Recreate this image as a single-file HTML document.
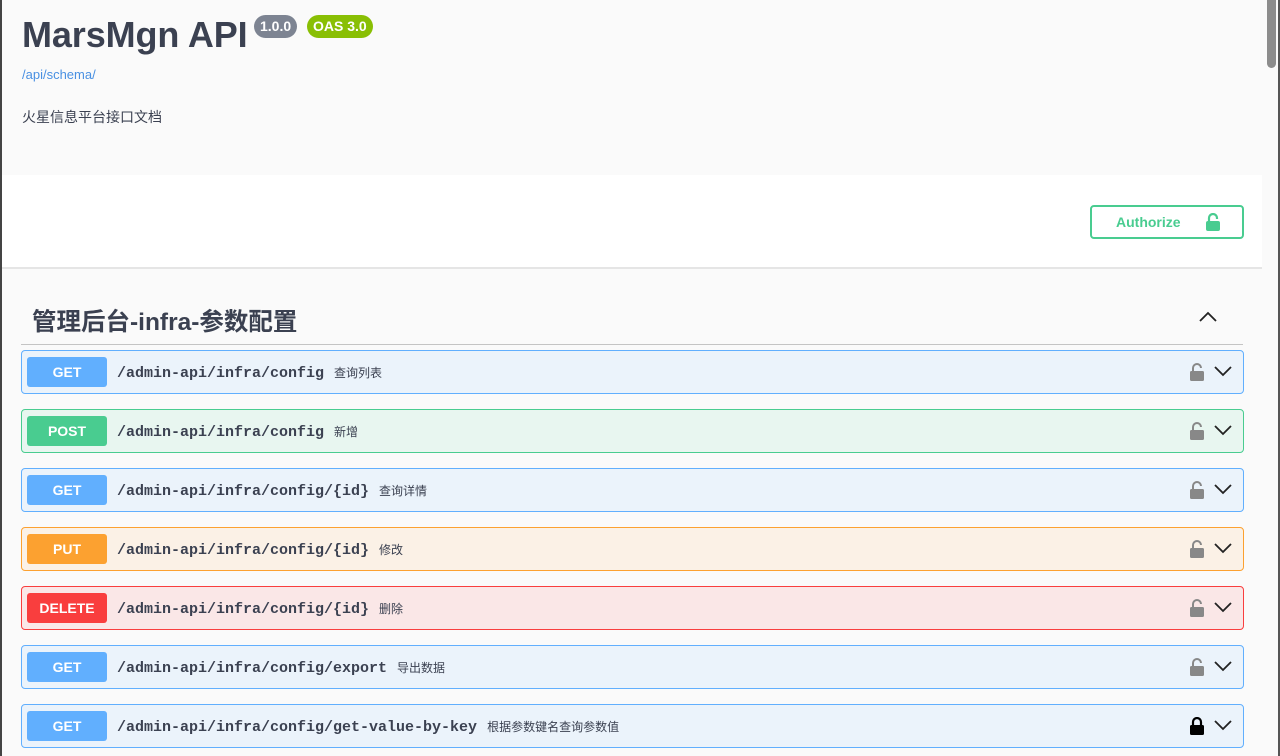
<!DOCTYPE html>
<html><head><meta charset="utf-8"><style>
*{box-sizing:border-box;margin:0;padding:0}
body{width:1280px;height:756px;overflow:hidden;background:#fafafa;font-family:"Liberation Sans","Noto Sans CJK SC",sans-serif;position:relative;color:#3b4151}
.lb{position:absolute;left:0;top:0;width:2px;height:756px;background:#444}
.sb{position:absolute;left:1262px;top:0;width:18px;height:756px;background:#fafafa}
.sb .th{position:absolute;left:5px;top:0;width:9px;height:68px;background:#8c8c8c;border-radius:0 0 5px 5px}
.sb .rl{position:absolute;right:0;top:0;width:2px;height:756px;background:#555}
.hdr{position:absolute;left:2px;top:0;width:1260px;height:175px;background:#fafafa}
h1{position:absolute;left:22px;top:14px;font-size:36px;font-weight:bold;color:#3b4151;letter-spacing:-0.1px}
.badge{position:absolute;top:15px;height:23px;border-radius:12px;color:#fff;font-weight:bold;font-size:14px;line-height:23px;padding:0 6px}
.link{position:absolute;left:22px;top:67px;font-size:13px;color:#4990e2}
.desc{position:absolute;left:22px;top:107px;font-size:14px;color:#3b4151}
.band{position:absolute;left:2px;top:175px;width:1260px;height:94px;background:#fff;border-bottom:2px solid #e5e5e5}
.auth{position:absolute;left:1090px;top:205px;width:154px;height:34px;border:2px solid #49cc90;border-radius:4px;color:#49cc90;font-weight:bold;font-size:14px;line-height:31px;padding-left:24px}
.tag{position:absolute;left:32px;top:303px;font-size:24.5px;font-weight:bold;color:#3b4151}
.tline{position:absolute;left:21px;top:344px;width:1222px;height:1px;background:#c4c4c4}
.op{position:absolute;left:21px;width:1223px;height:44px;border:1px solid;border-radius:4px}
.m{position:absolute;left:5px;top:6px;width:80px;height:30px;border-radius:3px;color:#fff;font-weight:bold;font-size:14px;line-height:30px;text-align:center}
.p{position:absolute;left:95px;top:13px;font-family:"Liberation Mono",monospace;font-weight:bold;font-size:15px;color:#3b4151;white-space:nowrap}
.p span{font-family:"Liberation Sans","Noto Sans CJK SC",sans-serif;font-weight:normal;font-size:12px;margin-left:10px}
.lk{position:absolute;left:1167px;top:12px}
.cv{position:absolute;left:1191px;top:14px}
</style></head><body>
<div class="hdr"></div>
<h1>MarsMgn API</h1>
<div class="badge" style="left:254px;background:#7d8492">1.0.0</div>
<div class="badge" style="left:307px;background:#89bf04">OAS 3.0</div>
<div class="link">/api/schema/</div>
<div class="desc">火星信息平台接口文档</div>
<div class="band"></div>
<div class="auth">Authorize<svg style="position:absolute;left:113px;top:6px" width="16" height="19" viewBox="0 0 16 19"><path d="M4 8V5a4 4 0 0 1 8 0v1" fill="none" stroke="#49cc90" stroke-width="2.2"/><rect x="1" y="8" width="14" height="10" rx="2" fill="#49cc90"/></svg></div>
<div class="tag">管理后台-infra-参数配置</div>
<svg style="position:absolute;left:1199px;top:311px" width="18" height="12" viewBox="0 0 18 12"><path d="M1 10L9 2l8 8" fill="none" stroke="#222" stroke-width="1.8"/></svg>
<div class="tline"></div>

<div class="op" style="top:350px;background:#ebf3fb;border-color:#61affe"><div class="m" style="background:#61affe">GET</div><div class="p">/admin-api/infra/config<span>查询列表</span></div><svg class="lk" width="16" height="18" viewBox="0 0 16 18"><path d="M4 8V5a4 4 0 0 1 8 0" fill="none" stroke="#888" stroke-width="2"/><rect x="1" y="8" width="14" height="10" rx="1.5" fill="#888"/></svg><svg class="cv" width="20" height="12" viewBox="0 0 20 12"><path d="M2 2l8 8 8-8" fill="none" stroke="#222" stroke-width="1.8"/></svg></div>

<div class="op" style="top:409px;background:#e8f6f0;border-color:#49cc90"><div class="m" style="background:#49cc90">POST</div><div class="p">/admin-api/infra/config<span>新增</span></div><svg class="lk" width="16" height="18" viewBox="0 0 16 18"><path d="M4 8V5a4 4 0 0 1 8 0" fill="none" stroke="#888" stroke-width="2"/><rect x="1" y="8" width="14" height="10" rx="1.5" fill="#888"/></svg><svg class="cv" width="20" height="12" viewBox="0 0 20 12"><path d="M2 2l8 8 8-8" fill="none" stroke="#222" stroke-width="1.8"/></svg></div>

<div class="op" style="top:468px;background:#ebf3fb;border-color:#61affe"><div class="m" style="background:#61affe">GET</div><div class="p">/admin-api/infra/config/{id}<span>查询详情</span></div><svg class="lk" width="16" height="18" viewBox="0 0 16 18"><path d="M4 8V5a4 4 0 0 1 8 0" fill="none" stroke="#888" stroke-width="2"/><rect x="1" y="8" width="14" height="10" rx="1.5" fill="#888"/></svg><svg class="cv" width="20" height="12" viewBox="0 0 20 12"><path d="M2 2l8 8 8-8" fill="none" stroke="#222" stroke-width="1.8"/></svg></div>

<div class="op" style="top:527px;background:#fbf1e6;border-color:#fca130"><div class="m" style="background:#fca130">PUT</div><div class="p">/admin-api/infra/config/{id}<span>修改</span></div><svg class="lk" width="16" height="18" viewBox="0 0 16 18"><path d="M4 8V5a4 4 0 0 1 8 0" fill="none" stroke="#888" stroke-width="2"/><rect x="1" y="8" width="14" height="10" rx="1.5" fill="#888"/></svg><svg class="cv" width="20" height="12" viewBox="0 0 20 12"><path d="M2 2l8 8 8-8" fill="none" stroke="#222" stroke-width="1.8"/></svg></div>

<div class="op" style="top:586px;background:#fae7e7;border-color:#f93e3e"><div class="m" style="background:#f93e3e">DELETE</div><div class="p">/admin-api/infra/config/{id}<span>删除</span></div><svg class="lk" width="16" height="18" viewBox="0 0 16 18"><path d="M4 8V5a4 4 0 0 1 8 0" fill="none" stroke="#888" stroke-width="2"/><rect x="1" y="8" width="14" height="10" rx="1.5" fill="#888"/></svg><svg class="cv" width="20" height="12" viewBox="0 0 20 12"><path d="M2 2l8 8 8-8" fill="none" stroke="#222" stroke-width="1.8"/></svg></div>

<div class="op" style="top:645px;background:#ebf3fb;border-color:#61affe"><div class="m" style="background:#61affe">GET</div><div class="p">/admin-api/infra/config/export<span>导出数据</span></div><svg class="lk" width="16" height="18" viewBox="0 0 16 18"><path d="M4 8V5a4 4 0 0 1 8 0" fill="none" stroke="#888" stroke-width="2"/><rect x="1" y="8" width="14" height="10" rx="1.5" fill="#888"/></svg><svg class="cv" width="20" height="12" viewBox="0 0 20 12"><path d="M2 2l8 8 8-8" fill="none" stroke="#222" stroke-width="1.8"/></svg></div>

<div class="op" style="top:704px;background:#ebf3fb;border-color:#61affe"><div class="m" style="background:#61affe">GET</div><div class="p">/admin-api/infra/config/get-value-by-key<span>根据参数键名查询参数值</span></div><svg class="lk" width="16" height="18" viewBox="0 0 16 18"><path d="M4 8V5a4 4 0 0 1 8 0v3" fill="none" stroke="#000" stroke-width="2.2"/><rect x="1" y="8" width="14" height="10" rx="1.5" fill="#000"/></svg><svg class="cv" width="20" height="12" viewBox="0 0 20 12"><path d="M2 2l8 8 8-8" fill="none" stroke="#222" stroke-width="1.8"/></svg></div>

<div class="lb"></div>
<div class="sb"><div class="th"></div><div class="rl"></div></div>
</body></html>
